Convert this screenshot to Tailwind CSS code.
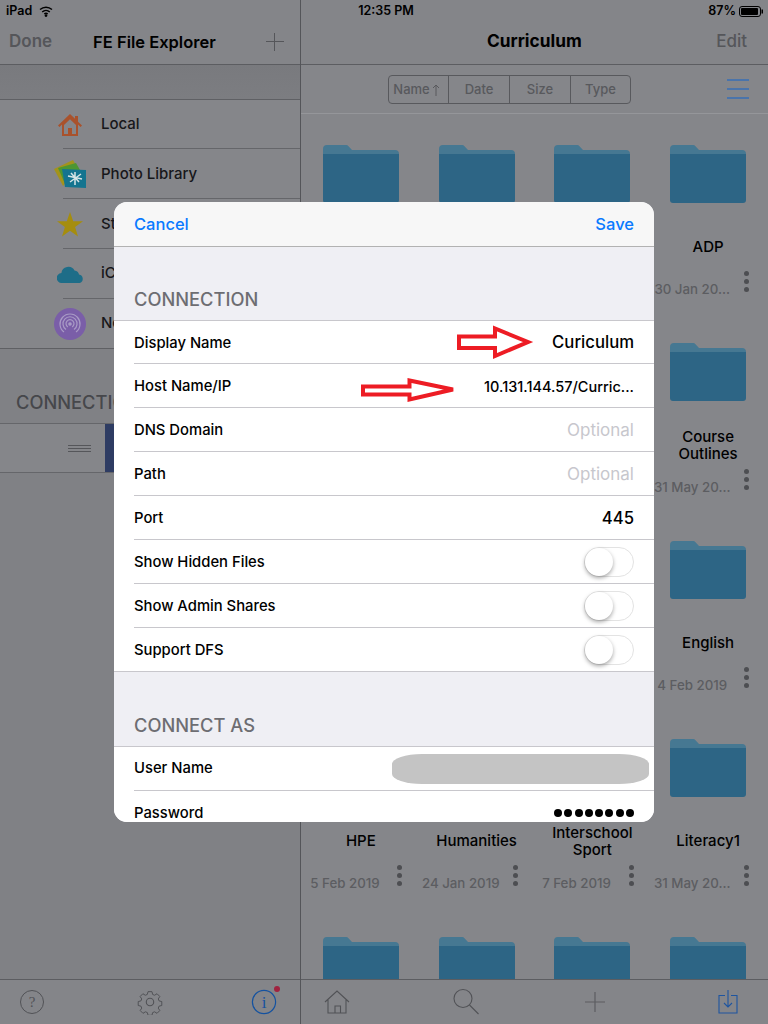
<!DOCTYPE html>
<html>
<head>
<meta charset="utf-8">
<script src="https://cdn.jsdelivr.net/npm/@tailwindcss/browser@4"></script>
</head>
<body class="m-0">
<div class="relative w-[768px] h-[1024px] overflow-hidden flex bg-[#85868a] text-black font-['Inter','Liberation_Sans',sans-serif]">

  <!-- status bar -->
  <div class="absolute top-0 left-0 w-full h-[23px] flex items-center justify-between text-[12.5px] font-semibold z-10">
    <div class="flex items-center pl-[6px] gap-[7px] w-[202px]">
      <span>iPad</span>
      <svg width="14" height="11" viewBox="0 0 14 11" fill="none" stroke="#000" stroke-width="1.4"><path d="M1 3.6C4.5.4 9.5.4 13 3.6"/><path d="M3.2 5.9c2.2-2 5.4-2 7.6 0"/><path d="M5.3 8c1-.9 2.4-.9 3.4 0"/><circle cx="7" cy="9.6" r=".7" fill="#000"/></svg>
    </div>
    <span>12:35 PM</span>
    <div class="flex items-center justify-end pr-[5px] gap-[3px] w-[198px]">
      <span>87%</span>
      <svg width="24" height="11" viewBox="0 0 24 11"><rect x=".5" y=".5" width="21" height="10" rx="2.5" fill="none" stroke="#000"/><rect x="2" y="2" width="17" height="7" rx="1" fill="#000"/><rect x="22.5" y="3.5" width="1.5" height="4" fill="#000"/></svg>
    </div>
  </div>

  <!-- left pane -->
  <div class="w-[301px] h-full flex flex-col border-r border-[#545559] bg-[#808185]">
    <div class="h-[65px] shrink-0 border-b border-[#5c5d61] bg-[#848589] pt-[20px] flex items-center pl-[9px] pr-[16px] text-[17px]">
      <span class="font-semibold text-[#55565a]">Done</span>
      <span class="font-semibold text-[16.5px] ml-[41px]">FE File Explorer</span>
      <svg class="ml-auto" width="18" height="18" viewBox="0 0 18 18" stroke="#55565a" stroke-width="1"><path d="M8.500 0v18M0 8.500h18"/></svg>
    </div>
    <div class="h-[35px] shrink-0 border-b border-[#5f6064] bg-gradient-to-b from-[#797a7e] to-[#7c7d81]"></div>
    <div class="shrink-0 bg-[#85868a] border-b border-[#5f6064]">
      <div class="h-[49px] flex items-center">
        <div class="w-[63px] h-full pl-[57px] flex items-center shrink-0">
          <svg class="shrink-0" width="26" height="24" viewBox="0 0 26 24" fill="#a9522c"><path d="M13 1 1 12.5l1.5 1.5L5 11.600V23h16V11.600l2.500 2.400L25 12.500 21 8.700V3h-3v2.800L13 1Zm-6 11 6-5.800 6 5.800v9h-4v-6h-4v6H7v-9Z"/><rect x="11" y="15" width="4" height="6"/></svg>
        </div>
        <div class="flex-1 h-full border-b border-[#65666a] flex items-center pl-[38px] text-[15px] font-medium text-[#17171a]">Local</div>
      </div>
      <div class="h-[50px] flex items-center">
        <div class="w-[63px] h-full pl-[54px] flex items-center shrink-0">
          <svg class="shrink-0" width="32" height="28" viewBox="0 0 32 28"><path d="M0 9 19 0l5 9-15 17Z" fill="#a3931c"/><path d="M4 8 22 3l4 7-14 16Z" fill="#4d9632"/><path d="M8 9l24 1v18l-21-1Z" fill="#14748f"/><path d="M21 12v13M14 16l14 3M16 22l11-8M17 13l8 9" stroke="#d6e4e6" stroke-width="1.500"/></svg>
        </div>
        <div class="flex-1 h-full border-b border-[#65666a] flex items-center pl-[38px] pt-[2px] text-[15px] font-medium text-[#17171a]">Photo Library</div>
      </div>
      <div class="h-[50px] flex items-center">
        <div class="w-[63px] h-full pl-[57px] flex items-center shrink-0">
          <svg class="shrink-0" width="26" height="25" viewBox="0 0 26 25" fill="#a58d0e"><path d="m13 0 3.200 9.200H26l-7.900 5.700L21 24.500l-8-5.800-8 5.800 2.900-9.600L0 9.200h9.800Z"/></svg>
        </div>
        <div class="flex-1 h-full border-b border-[#65666a] flex items-center pl-[38px] pt-[1px] text-[15px] font-medium text-[#17171a]">Storage</div>
      </div>
      <div class="h-[50px] flex items-center">
        <div class="w-[63px] h-full pl-[57px] flex items-center shrink-0">
          <svg class="shrink-0" width="27" height="17" viewBox="0 0 27 17" fill="#1e6d88"><path d="M5 17a5 5 0 0 1-.6-10A7 7 0 0 1 17.500 4.400 5 5 0 0 1 22 8.600 4.300 4.300 0 0 1 22.600 17Z"/></svg>
        </div>
        <div class="flex-1 h-full border-b border-[#65666a] flex items-center pl-[38px] text-[15px] font-medium text-[#17171a]">iCloud Drive</div>
      </div>
      <div class="h-[49px] flex items-center">
        <div class="w-[63px] h-full pl-[54px] flex items-center shrink-0">
          <svg class="shrink-0" width="32" height="32" viewBox="0 0 32 32" fill="none" stroke="#a99bc6" stroke-width="1.200"><circle cx="16" cy="16" r="16" fill="#7a5ea8" stroke="none"/><path d="M10 24A10 10 0 1 1 22 24"/><path d="M12 21.500A7 7 0 1 1 20 21.500"/><path d="M13.800 19A4 4 0 1 1 18.200 19"/><circle cx="16" cy="16" r="1.200" fill="#a99bc6"/></svg>
        </div>
        <div class="flex-1 h-full flex items-center pl-[38px] text-[15px] font-medium text-[#17171a]">Network</div>
      </div>
    </div>
    <div class="h-[74px] shrink-0 flex items-end pl-[16px] pb-[7px] text-[18.3px] font-medium text-[#46474b] whitespace-nowrap overflow-hidden">CONNECTIONS</div>
    <div class="h-[50px] shrink-0 bg-[#85868a] border-y border-[#65666a] flex items-stretch">
      <div class="w-[105px] flex items-center justify-end pr-[14px]">
        <div class="w-[23px] h-[7px] border-y border-[#55565a] flex items-center"><div class="w-full h-px bg-[#55565a]"></div></div>
      </div>
      <div class="flex-1 bg-[#2e3c63]"></div>
    </div>
    <div class="flex-1"></div>
    <div class="h-[45px] shrink-0 border-t border-[#5c5d61] bg-[#848589] flex items-center pl-[19px]">
      <svg class="shrink-0" width="26" height="26" viewBox="0 0 26 26" fill="none" stroke="#515256"><circle cx="13" cy="13" r="11.500"/><text x="13" y="18" text-anchor="middle" font-family="Liberation Serif" font-size="15" fill="#515256" stroke="none">?</text></svg>
      <svg class="shrink-0 ml-[92px]" width="26" height="26" viewBox="0 0 26 26" fill="none" stroke="#515256" stroke-width="1.100"><circle cx="13" cy="13" r="3.700"/><path d="M10.800 1.500h4.400l.7 3.100 2.200.9 2.700-1.700 3.100 3.100-1.700 2.700.9 2.200 3 .7v4.400l-3 .7-.9 2.200 1.700 2.700-3.100 3.100-2.700-1.700-2.200.9-.7 3h-4.400l-.7-3-2.200-.9-2.700 1.700-3.100-3.100 1.700-2.700-.9-2.200-3-.7v-4.400l3-.7.9-2.200L2 6.900 5.100 3.800l2.700 1.700 2.200-.9Z" transform="translate(1.300 1.300) scale(.9)"/></svg>
      <div class="relative shrink-0 ml-[88px] w-[26px] h-[26px]">
        <svg width="26" height="26" viewBox="0 0 26 26" fill="none" stroke="#1452a0" stroke-width="1.200"><circle cx="13" cy="13" r="11.600"/><text x="13" y="19" text-anchor="middle" font-family="Liberation Serif" font-size="17" fill="#1452a0" stroke="none">i</text></svg>
        <div class="absolute -top-[3px] -right-[3px] w-[6px] h-[6px] rounded-full bg-[#a0223f]"></div>
      </div>
    </div>
  </div>

  <!-- right pane -->
  <div class="flex-1 h-full flex flex-col bg-[#85868a] min-w-0">
    <div class="relative h-[65px] shrink-0 border-b border-[#5c5d61] bg-[#848589] pt-[20px] flex items-center justify-end pr-[21px]">
      <span class="absolute left-[186px] top-[32px] font-bold text-[17.3px] leading-[18px]">Curriculum</span>
      <span class="text-[17px] font-medium text-[#55565a]">Edit</span>
    </div>
    <div class="h-[49px] shrink-0 border-b border-[#95969a] bg-[#85868a] flex items-center justify-between pl-[87px] pr-[19px]">
      <div class="w-[243px] h-[29px] border border-[#58595d] rounded-[4px] flex text-[13px] font-medium text-[#58595d]">
        <div class="w-[60px] flex items-center justify-center gap-[2px] border-r border-[#58595d] pt-[1px] pr-[4px]">Name<svg width="8" height="12" viewBox="0 0 8 12" fill="none" stroke="#58595d"><path d="M4 12V1M1 4l3-3 3 3"/></svg></div>
        <div class="w-[61px] flex items-center justify-center border-r border-[#58595d] pt-[1px]">Date</div>
        <div class="w-[61px] flex items-center justify-center border-r border-[#58595d] pt-[1px]">Size</div>
        <div class="flex-1 flex items-center justify-center pt-[1px]">Type</div>
      </div>
      <div class="w-[22px] flex flex-col gap-[7px]">
        <div class="h-[2px] bg-[#4a74ab]"></div><div class="h-[2px] bg-[#4a74ab]"></div><div class="h-[2px] bg-[#4a74ab]"></div>
      </div>
    </div>
    <div class="flex-1 min-h-0 overflow-hidden pl-[2px] pr-[2px] pt-[31px]">
      <div class="grid grid-cols-4 auto-rows-[198px]">
        <!-- row 1 -->
        <div class="flex flex-col items-center"><svg width="76" height="58" viewBox="0 0 76 58"><path d="M0 4a4 4 0 0 1 4-4h19a3 3 0 0 1 2.500 1.300L29 5h43a4 4 0 0 1 4 4v10H0Z" fill="#467892"/><path d="M0 9h76v46a3 3 0 0 1-3 3H3a3 3 0 0 1-3-3Z" fill="#2d6585"/></svg></div>
        <div class="flex flex-col items-center"><svg width="76" height="58" viewBox="0 0 76 58"><path d="M0 4a4 4 0 0 1 4-4h19a3 3 0 0 1 2.500 1.300L29 5h43a4 4 0 0 1 4 4v10H0Z" fill="#467892"/><path d="M0 9h76v46a3 3 0 0 1-3 3H3a3 3 0 0 1-3-3Z" fill="#2d6585"/></svg></div>
        <div class="flex flex-col items-center"><svg width="76" height="58" viewBox="0 0 76 58"><path d="M0 4a4 4 0 0 1 4-4h19a3 3 0 0 1 2.500 1.300L29 5h43a4 4 0 0 1 4 4v10H0Z" fill="#467892"/><path d="M0 9h76v46a3 3 0 0 1-3 3H3a3 3 0 0 1-3-3Z" fill="#2d6585"/></svg></div>
        <div class="flex flex-col items-center"><svg width="76" height="58" viewBox="0 0 76 58"><path d="M0 4a4 4 0 0 1 4-4h19a3 3 0 0 1 2.500 1.300L29 5h43a4 4 0 0 1 4 4v10H0Z" fill="#467892"/><path d="M0 9h76v46a3 3 0 0 1-3 3H3a3 3 0 0 1-3-3Z" fill="#2d6585"/></svg>
          <div class="mt-[20px] h-[46px] flex items-center text-center text-[15px] leading-[17px] font-medium">ADP</div>
          <div class="w-full flex items-center h-[34px]"><div class="w-[84px] pt-[7px] text-center text-[13.3px] text-[#5c5d61] font-medium whitespace-nowrap">30 Jan 20...</div><div class="ml-[10px] flex flex-col gap-[3px] -translate-y-[5px]"><i class="block w-[5px] h-[5px] rounded-full bg-[#4d4e52]"></i><i class="block w-[5px] h-[5px] rounded-full bg-[#4d4e52]"></i><i class="block w-[5px] h-[5px] rounded-full bg-[#4d4e52]"></i></div></div>
        </div>
        <!-- row 2 -->
        <div class="flex flex-col items-center"><svg width="76" height="58" viewBox="0 0 76 58"><path d="M0 4a4 4 0 0 1 4-4h19a3 3 0 0 1 2.500 1.300L29 5h43a4 4 0 0 1 4 4v10H0Z" fill="#467892"/><path d="M0 9h76v46a3 3 0 0 1-3 3H3a3 3 0 0 1-3-3Z" fill="#2d6585"/></svg></div>
        <div class="flex flex-col items-center"><svg width="76" height="58" viewBox="0 0 76 58"><path d="M0 4a4 4 0 0 1 4-4h19a3 3 0 0 1 2.500 1.300L29 5h43a4 4 0 0 1 4 4v10H0Z" fill="#467892"/><path d="M0 9h76v46a3 3 0 0 1-3 3H3a3 3 0 0 1-3-3Z" fill="#2d6585"/></svg></div>
        <div class="flex flex-col items-center"><svg width="76" height="58" viewBox="0 0 76 58"><path d="M0 4a4 4 0 0 1 4-4h19a3 3 0 0 1 2.500 1.300L29 5h43a4 4 0 0 1 4 4v10H0Z" fill="#467892"/><path d="M0 9h76v46a3 3 0 0 1-3 3H3a3 3 0 0 1-3-3Z" fill="#2d6585"/></svg></div>
        <div class="flex flex-col items-center"><svg width="76" height="58" viewBox="0 0 76 58"><path d="M0 4a4 4 0 0 1 4-4h19a3 3 0 0 1 2.500 1.300L29 5h43a4 4 0 0 1 4 4v10H0Z" fill="#467892"/><path d="M0 9h76v46a3 3 0 0 1-3 3H3a3 3 0 0 1-3-3Z" fill="#2d6585"/></svg>
          <div class="mt-[20px] pt-[2px] h-[46px] flex items-center text-center text-[15px] leading-[17px] font-medium">Course<br>Outlines</div>
          <div class="w-full flex items-center h-[34px]"><div class="w-[84px] pt-[7px] text-center text-[13.3px] text-[#5c5d61] font-medium whitespace-nowrap">31 May 20...</div><div class="ml-[10px] flex flex-col gap-[3px] -translate-y-[5px]"><i class="block w-[5px] h-[5px] rounded-full bg-[#4d4e52]"></i><i class="block w-[5px] h-[5px] rounded-full bg-[#4d4e52]"></i><i class="block w-[5px] h-[5px] rounded-full bg-[#4d4e52]"></i></div></div>
        </div>
        <!-- row 3 -->
        <div class="flex flex-col items-center"><svg width="76" height="58" viewBox="0 0 76 58"><path d="M0 4a4 4 0 0 1 4-4h19a3 3 0 0 1 2.500 1.300L29 5h43a4 4 0 0 1 4 4v10H0Z" fill="#467892"/><path d="M0 9h76v46a3 3 0 0 1-3 3H3a3 3 0 0 1-3-3Z" fill="#2d6585"/></svg></div>
        <div class="flex flex-col items-center"><svg width="76" height="58" viewBox="0 0 76 58"><path d="M0 4a4 4 0 0 1 4-4h19a3 3 0 0 1 2.500 1.300L29 5h43a4 4 0 0 1 4 4v10H0Z" fill="#467892"/><path d="M0 9h76v46a3 3 0 0 1-3 3H3a3 3 0 0 1-3-3Z" fill="#2d6585"/></svg></div>
        <div class="flex flex-col items-center"><svg width="76" height="58" viewBox="0 0 76 58"><path d="M0 4a4 4 0 0 1 4-4h19a3 3 0 0 1 2.500 1.300L29 5h43a4 4 0 0 1 4 4v10H0Z" fill="#467892"/><path d="M0 9h76v46a3 3 0 0 1-3 3H3a3 3 0 0 1-3-3Z" fill="#2d6585"/></svg></div>
        <div class="flex flex-col items-center"><svg width="76" height="58" viewBox="0 0 76 58"><path d="M0 4a4 4 0 0 1 4-4h19a3 3 0 0 1 2.500 1.300L29 5h43a4 4 0 0 1 4 4v10H0Z" fill="#467892"/><path d="M0 9h76v46a3 3 0 0 1-3 3H3a3 3 0 0 1-3-3Z" fill="#2d6585"/></svg>
          <div class="mt-[20px] h-[46px] flex items-center text-center text-[15px] leading-[17px] font-medium">English</div>
          <div class="w-full flex items-center h-[34px]"><div class="w-[84px] pt-[7px] text-center text-[13.3px] text-[#5c5d61] font-medium whitespace-nowrap">4 Feb 2019</div><div class="ml-[10px] flex flex-col gap-[3px] -translate-y-[5px]"><i class="block w-[5px] h-[5px] rounded-full bg-[#4d4e52]"></i><i class="block w-[5px] h-[5px] rounded-full bg-[#4d4e52]"></i><i class="block w-[5px] h-[5px] rounded-full bg-[#4d4e52]"></i></div></div>
        </div>
        <!-- row 4 -->
        <div class="flex flex-col items-center"><svg width="76" height="58" viewBox="0 0 76 58"><path d="M0 4a4 4 0 0 1 4-4h19a3 3 0 0 1 2.500 1.300L29 5h43a4 4 0 0 1 4 4v10H0Z" fill="#467892"/><path d="M0 9h76v46a3 3 0 0 1-3 3H3a3 3 0 0 1-3-3Z" fill="#2d6585"/></svg>
          <div class="mt-[20px] h-[46px] flex items-center text-center text-[15px] leading-[17px] font-medium">HPE</div>
          <div class="w-full flex items-center h-[34px]"><div class="w-[84px] pt-[7px] text-center text-[13.3px] text-[#5c5d61] font-medium whitespace-nowrap">5 Feb 2019</div><div class="ml-[10px] flex flex-col gap-[3px] -translate-y-[5px]"><i class="block w-[5px] h-[5px] rounded-full bg-[#4d4e52]"></i><i class="block w-[5px] h-[5px] rounded-full bg-[#4d4e52]"></i><i class="block w-[5px] h-[5px] rounded-full bg-[#4d4e52]"></i></div></div>
        </div>
        <div class="flex flex-col items-center"><svg width="76" height="58" viewBox="0 0 76 58"><path d="M0 4a4 4 0 0 1 4-4h19a3 3 0 0 1 2.500 1.300L29 5h43a4 4 0 0 1 4 4v10H0Z" fill="#467892"/><path d="M0 9h76v46a3 3 0 0 1-3 3H3a3 3 0 0 1-3-3Z" fill="#2d6585"/></svg>
          <div class="mt-[20px] h-[46px] flex items-center text-center text-[15px] leading-[17px] font-medium">Humanities</div>
          <div class="w-full flex items-center h-[34px]"><div class="w-[84px] pt-[7px] text-center text-[13.3px] text-[#5c5d61] font-medium whitespace-nowrap">24 Jan 2019</div><div class="ml-[10px] flex flex-col gap-[3px] -translate-y-[5px]"><i class="block w-[5px] h-[5px] rounded-full bg-[#4d4e52]"></i><i class="block w-[5px] h-[5px] rounded-full bg-[#4d4e52]"></i><i class="block w-[5px] h-[5px] rounded-full bg-[#4d4e52]"></i></div></div>
        </div>
        <div class="flex flex-col items-center"><svg width="76" height="58" viewBox="0 0 76 58"><path d="M0 4a4 4 0 0 1 4-4h19a3 3 0 0 1 2.500 1.300L29 5h43a4 4 0 0 1 4 4v10H0Z" fill="#467892"/><path d="M0 9h76v46a3 3 0 0 1-3 3H3a3 3 0 0 1-3-3Z" fill="#2d6585"/></svg>
          <div class="mt-[20px] pt-[2px] h-[46px] flex items-center text-center text-[15px] leading-[17px] font-medium">Interschool<br>Sport</div>
          <div class="w-full flex items-center h-[34px]"><div class="w-[84px] pt-[7px] text-center text-[13.3px] text-[#5c5d61] font-medium whitespace-nowrap">7 Feb 2019</div><div class="ml-[10px] flex flex-col gap-[3px] -translate-y-[5px]"><i class="block w-[5px] h-[5px] rounded-full bg-[#4d4e52]"></i><i class="block w-[5px] h-[5px] rounded-full bg-[#4d4e52]"></i><i class="block w-[5px] h-[5px] rounded-full bg-[#4d4e52]"></i></div></div>
        </div>
        <div class="flex flex-col items-center"><svg width="76" height="58" viewBox="0 0 76 58"><path d="M0 4a4 4 0 0 1 4-4h19a3 3 0 0 1 2.500 1.300L29 5h43a4 4 0 0 1 4 4v10H0Z" fill="#467892"/><path d="M0 9h76v46a3 3 0 0 1-3 3H3a3 3 0 0 1-3-3Z" fill="#2d6585"/></svg>
          <div class="mt-[20px] h-[46px] flex items-center text-center text-[15px] leading-[17px] font-medium">Literacy1</div>
          <div class="w-full flex items-center h-[34px]"><div class="w-[84px] pt-[7px] text-center text-[13.3px] text-[#5c5d61] font-medium whitespace-nowrap">31 May 20...</div><div class="ml-[10px] flex flex-col gap-[3px] -translate-y-[5px]"><i class="block w-[5px] h-[5px] rounded-full bg-[#4d4e52]"></i><i class="block w-[5px] h-[5px] rounded-full bg-[#4d4e52]"></i><i class="block w-[5px] h-[5px] rounded-full bg-[#4d4e52]"></i></div></div>
        </div>
        <!-- row 5 -->
        <div class="flex flex-col items-center"><svg width="76" height="58" viewBox="0 0 76 58"><path d="M0 4a4 4 0 0 1 4-4h19a3 3 0 0 1 2.500 1.300L29 5h43a4 4 0 0 1 4 4v10H0Z" fill="#467892"/><path d="M0 9h76v46a3 3 0 0 1-3 3H3a3 3 0 0 1-3-3Z" fill="#2d6585"/></svg></div>
        <div class="flex flex-col items-center"><svg width="76" height="58" viewBox="0 0 76 58"><path d="M0 4a4 4 0 0 1 4-4h19a3 3 0 0 1 2.500 1.300L29 5h43a4 4 0 0 1 4 4v10H0Z" fill="#467892"/><path d="M0 9h76v46a3 3 0 0 1-3 3H3a3 3 0 0 1-3-3Z" fill="#2d6585"/></svg></div>
        <div class="flex flex-col items-center"><svg width="76" height="58" viewBox="0 0 76 58"><path d="M0 4a4 4 0 0 1 4-4h19a3 3 0 0 1 2.500 1.300L29 5h43a4 4 0 0 1 4 4v10H0Z" fill="#467892"/><path d="M0 9h76v46a3 3 0 0 1-3 3H3a3 3 0 0 1-3-3Z" fill="#2d6585"/></svg></div>
        <div class="flex flex-col items-center"><svg width="76" height="58" viewBox="0 0 76 58"><path d="M0 4a4 4 0 0 1 4-4h19a3 3 0 0 1 2.500 1.300L29 5h43a4 4 0 0 1 4 4v10H0Z" fill="#467892"/><path d="M0 9h76v46a3 3 0 0 1-3 3H3a3 3 0 0 1-3-3Z" fill="#2d6585"/></svg></div>
      </div>
    </div>
    <div class="h-[45px] shrink-0 border-t border-[#5c5d61] bg-[#848589] flex items-center pl-[23px]">
      <svg class="shrink-0" width="26" height="26" viewBox="0 0 26 26" fill="none" stroke="#515256" stroke-width="1.100"><path d="M1 13 13 2l12 11M4 10.500V24h18V10.500M11 24v-7h5.500v7"/></svg>
      <svg class="shrink-0 ml-[102px]" width="28" height="28" viewBox="0 0 28 28" fill="none" stroke="#515256" stroke-width="1.100"><circle cx="11" cy="10.500" r="9"/><path d="m17.500 17 9 9"/></svg>
      <svg class="shrink-0 ml-[105px]" width="20" height="20" viewBox="0 0 20 20" stroke="#5c5d61" stroke-width="1.200"><path d="M10 0v20M0 10h20"/></svg>
      <svg class="shrink-0 ml-[113px]" width="20" height="24" viewBox="0 0 20 24" fill="none" stroke="#1e55a0" stroke-width="1.100"><path d="M7 5.500H1V23h18V5.500h-6"/><path d="M10 0v17M6 13l4 4 4-4"/></svg>
    </div>
  </div>

  <!-- modal over the dimmed page -->
  <div class="absolute left-[114px] top-[202px] w-[540px] h-[620px] rounded-[13px] overflow-hidden bg-[#efeff4] flex flex-col z-20">
    <div class="h-[45px] shrink-0 bg-[#f7f7f7] border-b border-[#b2b2b2] flex items-center justify-between px-[20px] text-[16.5px] text-[#0a7aff] font-medium">
      <span>Cancel</span><span>Save</span>
    </div>
    <div class="h-[73px] shrink-0 flex items-end pl-[20px] pb-[7px] text-[18.3px] font-medium text-[#6d6d72]">CONNECTION</div>
    <div class="shrink-0 bg-white border-y border-[#c8c7cc] text-[14.8px] font-medium [&_span]:translate-y-px">
      <div class="h-[43px] ml-[20px] pr-[20px] border-b border-[#c8c7cc] flex items-center justify-between"><span>Display Name</span><span class="text-[16.7px]">Curiculum</span></div>
      <div class="h-[44px] ml-[20px] pr-[20px] border-b border-[#c8c7cc] flex items-center justify-between"><span>Host Name/IP</span><span class="text-[14.5px]">10.131.144.57/Curric...</span></div>
      <div class="h-[44px] ml-[20px] pr-[20px] border-b border-[#c8c7cc] flex items-center justify-between"><span>DNS Domain</span><span class="text-[17px] text-[#c7c7cd] font-normal">Optional</span></div>
      <div class="h-[44px] ml-[20px] pr-[20px] border-b border-[#c8c7cc] flex items-center justify-between"><span>Path</span><span class="text-[17px] text-[#c7c7cd] font-normal">Optional</span></div>
      <div class="h-[44px] ml-[20px] pr-[20px] border-b border-[#c8c7cc] flex items-center justify-between"><span>Port</span><span class="text-[16.7px]">445</span></div>
      <div class="h-[44px] ml-[20px] pr-[20px] border-b border-[#c8c7cc] flex items-center justify-between"><span>Show Hidden Files</span><div class="w-[50px] h-[30px] rounded-full border border-[#e3e3e3] bg-white"><div class="w-[28px] h-[28px] rounded-full bg-white shadow-[0_2px_4px_rgba(0,0,0,0.35)]"></div></div></div>
      <div class="h-[44px] ml-[20px] pr-[20px] border-b border-[#c8c7cc] flex items-center justify-between"><span>Show Admin Shares</span><div class="w-[50px] h-[30px] rounded-full border border-[#e3e3e3] bg-white"><div class="w-[28px] h-[28px] rounded-full bg-white shadow-[0_2px_4px_rgba(0,0,0,0.35)]"></div></div></div>
      <div class="h-[43px] ml-[20px] pr-[20px] flex items-center justify-between"><span>Support DFS</span><div class="w-[50px] h-[30px] rounded-full border border-[#e3e3e3] bg-white"><div class="w-[28px] h-[28px] rounded-full bg-white shadow-[0_2px_4px_rgba(0,0,0,0.35)]"></div></div></div>
    </div>
    <div class="h-[74px] shrink-0 flex items-end pl-[20px] pb-[7px] text-[18.3px] font-medium text-[#6d6d72]">CONNECT AS</div>
    <div class="shrink-0 bg-white border-t border-[#c8c7cc] text-[14.8px] font-medium">
      <div class="h-[44px] ml-[20px] pr-[5px] border-b border-[#c8c7cc] flex items-center justify-between"><span>User Name</span><div class="w-[257px] h-[30px] rounded-[30px/10px] bg-[#c4c4c4]"></div></div>
      <div class="h-[44px] ml-[20px] pr-[20px] flex items-center justify-between"><span>Password</span><div class="flex gap-[2.300px]"><i class="block w-[8px] h-[8px] rounded-full bg-black"></i><i class="block w-[8px] h-[8px] rounded-full bg-black"></i><i class="block w-[8px] h-[8px] rounded-full bg-black"></i><i class="block w-[8px] h-[8px] rounded-full bg-black"></i><i class="block w-[8px] h-[8px] rounded-full bg-black"></i><i class="block w-[8px] h-[8px] rounded-full bg-black"></i><i class="block w-[8px] h-[8px] rounded-full bg-black"></i><i class="block w-[8px] h-[8px] rounded-full bg-black"></i></div></div>
    </div>
  </div>

  <!-- hand-drawn red arrows -->
  <svg class="absolute left-0 top-0 z-30 pointer-events-none" width="768" height="1024" fill="none" stroke="#ed1c24" stroke-width="4">
    <path d="M459 336.500h36v-8l33 13.500-33 14v-8h-36Z"/>
    <path d="M363 386.500h46.500v-6l43.500 9-43.500 10v-5H363Z"/>
  </svg>
</div>
</body>
</html>
